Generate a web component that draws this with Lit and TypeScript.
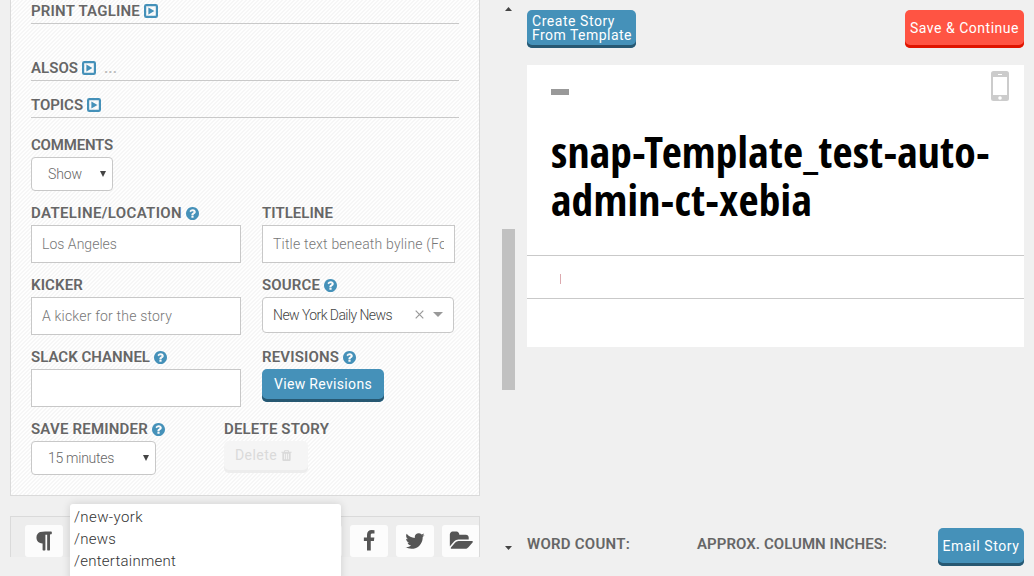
import { LitElement, html, css, svg } from "lit";
import { customElement, property } from "lit/decorators.js";

/** Text run tracked out to a given width in pixels. */
@customElement("tracked-text")
class TrackedText extends LitElement {
  @property({ type: Number }) width = 0;
  @property() text = "";
  static styles = css`
    :host { display: inline-block; white-space: pre; }
    .run { display: inline-block; white-space: pre; }
  `;
  firstUpdated() {
    const run = this.renderRoot.querySelector(".run") as HTMLElement;
    const natural = run.getBoundingClientRect().width;
    run.style.letterSpacing = `${(this.width - natural) / this.text.length}px`;
  }
  render() {
    return html`<span class="run">${this.text}</span>`;
  }
}

const t = (text: string, width: number) =>
  html`<tracked-text .text=${text} .width=${width}></tracked-text>`;

const paths = {
  help: "M1024 1376v-192q0-14-9-23t-23-9h-192q-14 0-23 9t-9 23v192q0 14 9 23t23 9h192q14 0 23-9t9-23zm256-672q0-88-55.5-163t-138.5-116-170-41q-243 0-371 213-15 24 8 42l132 100q7 6 19 6 16 0 25-12 53-68 86-92 34-24 86-24 48 0 85.5 26t37.5 59q0 38-20 61t-68 45q-63 28-115.5 86.5t-52.5 125.5v36q0 14 9 23t23 9h192q14 0 23-9t9-23q0-19 21.5-49.5t54.5-49.5q32-18 49-28.5t46-35 44.5-48 28-60.5 12.5-81zm384 192q0 209-103 385.5t-279.5 279.5-385.5 103-385.5-103-279.5-279.5-103-385.5 103-385.5 279.5-279.5 385.5-103 385.5 103 279.5 279.5 103 385.5z",
  trash: "M704 1376v-704q0-14-9-23t-23-9h-64q-14 0-23 9t-9 23v704q0 14 9 23t23 9h64q14 0 23-9t9-23zm256 0v-704q0-14-9-23t-23-9h-64q-14 0-23 9t-9 23v704q0 14 9 23t23 9h64q14 0 23-9t9-23zm256 0v-704q0-14-9-23t-23-9h-64q-14 0-23 9t-9 23v704q0 14 9 23t23 9h64q14 0 23-9t9-23zm-544-992h448l-48-117q-7-9-17-11h-317q-10 2-17 11zm928 32v64q0 14-9 23t-23 9h-96v948q0 83-47 143.5t-113 60.5h-832q-66 0-113-58.5t-47-141.5v-952h-96q-14 0-23-9t-9-23v-64q0-14 9-23t23-9h309l70-167q15-37 54-63t79-26h320q40 0 79 26t54 63l70 167h309q14 0 23 9t9 23z",
  paragraph: "M1534 189v73q0 29-18.5 61t-42.5 32q-50 0-54 1-26 6-32 31-3 11-3 64v1152q0 25-18 43t-43 18h-108q-25 0-43-18t-18-43v-1218h-143v1218q0 25-17.5 43t-43.5 18h-108q-26 0-43.5-18t-17.5-43v-496q-147-12-245-59-126-58-192-179-64-117-64-259 0-166 88-286 88-118 209-159 111-37 417-37h479q25 0 43 18t18 43z",
  facebook: "M1343 12v264h-157q-86 0-116 36t-30 108v189h293l-39 296h-254v759h-306v-759h-255v-296h255v-218q0-186 104-288.5t277-102.5q147 0 228 12z",
  twitter: "M1684 408q-67 98-162 167 1 14 1 42 0 130-38 259.5t-115.5 248.5-184.5 210.5-258 146-323 54.5q-271 0-496-145 35 4 78 4 225 0 401-138-105-2-188-64.5t-114-159.5q33 5 61 5 43 0 85-11-112-23-185.5-111.5t-73.5-205.5v-4q68 38 146 41-66-44-105-115t-39-154q0-88 44-163 121 149 294.5 238.5t371.5 99.5q-8-38-8-74 0-134 94.5-228.5t228.5-94.5q140 0 236 102 109-21 205-78-37 115-142 178 93-10 186-50z",
  folder: "M1943 952q0 31-31 66l-336 396q-43 51-120.5 86.5t-143.5 35.5h-1088q-34 0-60.5-13t-26.5-43q0-31 31-66l336-396q43-51 120.5-86.5t143.5-35.5h1088q34 0 60.5 13t26.5 43zm-343-344v160h-832q-94 0-197 47.5t-164 119.5l-337 396-5 6q0-4-.5-12.5t-.5-12.5v-960q0-92 66-158t158-66h320q92 0 158 66t66 158v32h544q92 0 158 66t66 158z",
};

const icon = (name: keyof typeof paths, cls: string, box = "0 0 1792 1792") =>
  html`<svg class=${cls} viewBox=${box}>${svg`<path fill="currentColor" d=${paths[name]}></path>`}</svg>`;

const expand = html`<svg class="expand" viewBox="0 0 14 14">
  <rect x="1.1" y="1.1" width="11.8" height="11.8" rx="1.2" fill="none" stroke="currentColor" stroke-width="2.2" />
  <path d="M4.4 3.4v7.2L10.4 7z" fill="currentColor" />
</svg>`;

const help = icon("help", "help", "128 128 1536 1536");

@customElement("app-root")
class AppRoot extends LitElement {
  static styles = css`
    :host {
      display: grid;
      grid-template-columns: 480px 47px 497px;
      height: 576px;
      overflow: hidden;
      position: relative;
      background: #f0f0f0;
      color: #666;
      font: 300 14px/20px Roboto, "Liberation Sans", sans-serif;
    }
    * { box-sizing: border-box; }
    svg { display: block; flex: none; }
    .editor { padding-left: 10px; }
    .panel {
      height: 496px;
      padding: 0 20px;
      border: 1px solid #dadada;
      border-top: 0;
      background: linear-gradient(135deg, #fefefe 25%, #f6f6f6 25% 50%, #fefefe 50% 75%, #f6f6f6 75%) 0 0 / 4px 4px;
    }
    .section, .label {
      display: flex;
      align-items: center;
      font-weight: 600;
      font-size: 15px;
      line-height: 20px;
    }
    .section { gap: 4px; align-items: flex-end; border-bottom: 1px solid #c9c9c9; }
    .section tracked-text { margin-bottom: 2px; }
    .tagline { height: 24px; }
    .alsos { height: 57px; }
    .topics { height: 37px; }
    .expand { width: 14px; height: 14px; color: #4591b9; margin-bottom: 5px; }
    .more { color: #bbb; margin-left: 4px; }
    .label { gap: 4px; height: 24px; }
    .help { width: 13px; height: 13px; color: #4591b9; }
    .comments { margin-top: 15px; height: 68px; }
    .pair { display: grid; grid-template-columns: 210px 193px; column-gap: 21px; height: 72px; }
    .pair.last { grid-template-columns: 172px 200px; }
    .input, .select, .picker {
      display: flex;
      align-items: center;
      border: 1px solid #c8c8c8;
      background: #fff;
    }
    .input { height: 38px; padding: 0 10px; color: #777; }
    .clip { overflow: hidden; flex: 1; height: 20px; }
    .select { height: 34px; padding: 0 6px 0 16px; border-radius: 4px; justify-content: space-between; }
    .show { width: 82px; }
    .minutes { width: 125px; }
    .arrow { width: 6px; height: 6px; color: #444; }
    .picker { width: 192px; height: 36px; padding: 0 10px; border-radius: 4px; color: #444; }
    .clear { width: 9px; height: 9px; margin: 0 9px 2px auto; }
    .drop { width: 10px; height: 5px; margin-bottom: 1px; }
    .button {
      display: flex;
      align-items: center;
      justify-content: center;
      border-radius: 5px;
      background: #4591b9;
      box-shadow: inset 0 -3px #275872;
      color: #fff;
      font-weight: 400;
      padding-bottom: 3px;
    }
    .revisions { width: 122px; height: 33px; padding-bottom: 4px; }
    .delete {
      width: 84px; height: 32px; gap: 3px; justify-content: flex-start; padding: 0 0 4px 11px;
      background: #f5f5f5; box-shadow: inset 0 -3px #ededed; color: #dadada;
    }
    .trash { width: 13px; height: 13px; }
    .toolbar {
      display: flex;
      gap: 8px;
      margin-top: 20px;
      height: 41px;
      padding: 8px 0 0 14px;
      border: 1px solid #dadada;
      border-bottom: 0;
      background: #ededed;
      overflow: hidden;
    }
    .tool {
      flex: none;
      width: 38px;
      height: 32px;
      display: grid;
      place-items: center;
      border-radius: 3px;
      background: #fcfcfc;
      color: #555;
    }
    .after-menu { margin-left: 233px; }
    .glyph { width: 22px; height: 22px; }
    .wide { width: 24px; height: 22px; }
    .menu {
      position: absolute;
      left: 70px;
      top: 504px;
      width: 271px;
      height: 80px;
      padding: 2px 4px;
      border-radius: 3px;
      background: #fff;
      box-shadow: 0 0 8px rgba(0, 0, 0, 0.14);
      color: #333;
      font-size: 15px;
      line-height: 22px;
    }
    .item { height: 22px; }
    .scroll { display: flex; flex-direction: column; padding-left: 22px; }
    .up, .down { width: 7px; height: 4px; margin-left: 3px; color: #444; }
    .up { margin-top: 7px; }
    .thumb { width: 13px; height: 161px; margin: 218px 0 156px; background: #c1c1c1; }
    .preview { display: flex; flex-direction: column; }
    .actions { display: flex; justify-content: space-between; padding-top: 10px; height: 65px; }
    .create { width: 109px; height: 38px; flex-direction: column; line-height: 14px; align-items: flex-start; padding-left: 5px; padding-bottom: 2px; }
    .save { width: 119px; height: 38px; background: #ff5443; box-shadow: inset 0 -3px #df1400; }
    .card { height: 282px; background: #fff; }
    .head { height: 190px; padding: 6px 15px 0 24px; }
    .top { display: flex; justify-content: space-between; height: 57px; }
    .dash { width: 18px; height: 6px; margin-top: 18px; background: #999; }
    .phone { width: 18px; height: 30px; }
    .title {
      margin: 0;
      color: #000;
      font: 700 43.5px/48px "Open Sans Condensed", "Open Sans", sans-serif;
      font-stretch: 75%;
    }
    .title tracked-text { display: block; height: 48px; }
    .byline { height: 44px; padding: 18px 0 0 33px; border: solid #c9c9c9; border-width: 1px 0; }
    .caret { width: 1px; height: 10px; background: #dca9ae; }
    .footer { display: flex; margin-top: 181px; height: 38px; align-items: flex-start; font-weight: 600; font-size: 15px; }
    .count { width: 170px; padding-top: 6px; }
    .inches { padding-top: 6px; }
    .email { width: 86px; height: 38px; margin-left: auto; font-size: 14px; }
  `;

  render() {
    const arrow = html`<svg class="arrow" viewBox="0 0 6 6"><path d="M0 0h6L3 6z" fill="currentColor" /></svg>`;
    return html`
      <div class="editor">
        <div class="panel">
          <div class="section tagline">${t("PRINT TAGLINE", 109)}${expand}</div>
          <div class="section alsos">${t("ALSOS", 47)}${expand}<span class="more">${t("...", 13)}</span></div>
          <div class="section topics">${t("TOPICS", 52)}${expand}</div>
          <div class="comments">
            <div class="label">${t("COMMENTS", 82)}</div>
            <div class="select show">${t("Show", 34)}${arrow}</div>
          </div>
          <div class="pair">
            <div>
              <div class="label">${t("DATELINE/LOCATION", 151)}${help}</div>
              <div class="input">${t("Los Angeles", 75)}</div>
            </div>
            <div>
              <div class="label">${t("TITLELINE", 71)}</div>
              <div class="input"><div class="clip">${t("Title text beneath byline (Fo", 174)}</div></div>
            </div>
          </div>
          <div class="pair">
            <div>
              <div class="label">${t("KICKER", 52)}</div>
              <div class="input">${t("A kicker for the story", 130)}</div>
            </div>
            <div>
              <div class="label">${t("SOURCE", 58)}${help}</div>
              <div class="picker">
                ${t("New York Daily News", 119)}
                <svg class="clear" viewBox="0 0 9 9"><path d="M.7.7l7.6 7.6M8.3.7L.7 8.3" stroke="#999" stroke-width="1.2" /></svg>
                <svg class="drop" viewBox="0 0 10 5"><path d="M0 0h10L5 5z" fill="#999" /></svg>
              </div>
            </div>
          </div>
          <div class="pair">
            <div>
              <div class="label">${t("SLACK CHANNEL", 119)}${help}</div>
              <div class="input"></div>
            </div>
            <div>
              <div class="label">${t("REVISIONS", 77)}${help}</div>
              <div class="button revisions">${t("View Revisions", 98)}</div>
            </div>
          </div>
          <div class="pair last">
            <div>
              <div class="label">${t("SAVE REMINDER", 117)}${help}</div>
              <div class="select minutes">${t("15 minutes", 66)}${arrow}</div>
            </div>
            <div>
              <div class="label">${t("DELETE STORY", 105)}</div>
              <div class="button delete">${t("Delete", 42)}${icon("trash", "trash")}</div>
            </div>
          </div>
        </div>
        <div class="toolbar">
          <div class="tool">${icon("paragraph", "glyph")}</div>
          <div class="tool after-menu"></div>
          <div class="tool">${icon("facebook", "glyph")}</div>
          <div class="tool">${icon("twitter", "glyph")}</div>
          <div class="tool">${icon("folder", "wide", "0 0 1945 1792")}</div>
        </div>
      </div>
      <div class="scroll">
        <svg class="up" viewBox="0 0 7 4"><path d="M0 4L3.5 0 7 4z" fill="currentColor" /></svg>
        <div class="thumb"></div>
        <svg class="down" viewBox="0 0 7 4"><path d="M0 0h7L3.5 4z" fill="currentColor" /></svg>
      </div>
      <div class="preview">
        <div class="actions">
          <div class="button create">${t("Create Story", 83)}${t("From Template", 100)}</div>
          <div class="button save">${t("Save & Continue", 109)}</div>
        </div>
        <div class="card">
          <div class="head">
            <div class="top">
              <div class="dash"></div>
              <svg class="phone" viewBox="0 0 18 30">
                <rect width="18" height="30" rx="2.5" fill="#ccc" />
                <rect x="2" y="6" width="14" height="18" fill="#fff" />
                <rect x="7" y="3" width="4" height="1" fill="#fff" />
                <circle cx="9" cy="27" r="1.8" fill="#fff" />
              </svg>
            </div>
            <h1 class="title">${t("snap-Template_test-auto-", 439)}${t("admin-ct-xebia", 261)}</h1>
          </div>
          <div class="byline"><div class="caret"></div></div>
        </div>
        <div class="footer">
          <div class="count">${t("WORD COUNT:", 103)}</div>
          <div class="inches">${t("APPROX. COLUMN INCHES:", 190)}</div>
          <div class="button email">${t("Email Story", 77)}</div>
        </div>
      </div>
      <div class="menu">
        <div class="item">${t("/new-york", 69)}</div>
        <div class="item">${t("/news", 42)}</div>
        <div class="item">${t("/entertainment", 102)}</div>
      </div>
    `;
  }
}
